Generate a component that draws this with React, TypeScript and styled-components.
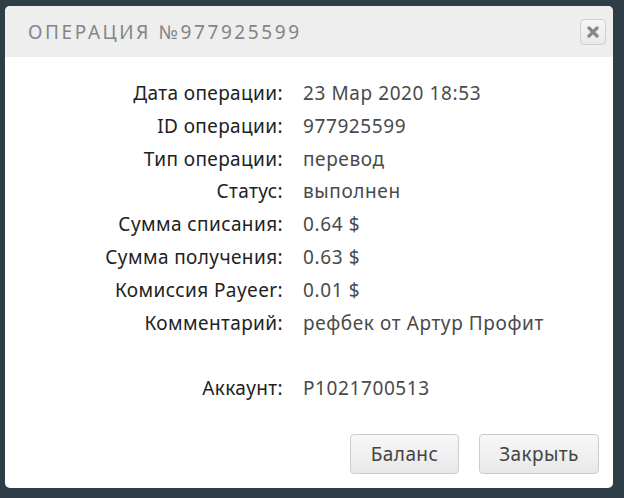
import styled, { createGlobalStyle } from "styled-components";

const GlobalStyle = createGlobalStyle`
  html, body {
    margin: 0;
    padding: 0;
    background: #2f3e46;
  }
  body {
    width: 624px;
    height: 498px;
    overflow: hidden;
  }
`;

const Page = styled.div`
  padding: 6px 11px 10px 5px;
  box-sizing: border-box;
  height: 498px;
`;

const Modal = styled.div`
  display: flex;
  flex-direction: column;
  width: 608px;
  height: 482px;
  background: #ffffff;
  border-radius: 5px;
  overflow: hidden;
`;

const Header = styled.div`
  display: flex;
  align-items: center;
  justify-content: space-between;
  height: 51px;
  padding: 0 7px 0 23px;
  background: #eeeeee;
`;

const Title = styled.h2`
  margin: 0;
  font-family: "Noto Sans", sans-serif;
  font-weight: 400;
  font-size: 19px;
  letter-spacing: 2.6px;
  color: #858585;
`;

const CloseButton = styled.button`
  display: flex;
  align-items: center;
  justify-content: center;
  width: 26px;
  height: 26px;
  padding: 0;
  border: 1px solid #cfcfcf;
  border-radius: 4px;
  background: linear-gradient(#f6f6f6, #e9e9e9);
`;

const Body = styled.div`
  flex: 1;
  display: flex;
  flex-direction: column;
  padding: 20px 14px 14px 0;
`;

const Details = styled.dl`
  display: grid;
  grid-template-columns: 278px 1fr;
  column-gap: 20px;
  margin: 0;
  font-family: "Noto Sans", sans-serif;
  font-size: 19px;
  letter-spacing: 0.4px;
  line-height: 32.8px;
`;

const Label = styled.dt`
  text-align: right;
  color: #222222;
`;

const Value = styled.dd`
  margin: 0;
  color: #4a4a4a;
  letter-spacing: 0.6px;
`;

const Spacer = styled.div`
  grid-column: 1 / -1;
  height: 32.8px;
`;

const Actions = styled.div`
  display: flex;
  justify-content: flex-end;
  gap: 20px;
  margin-top: auto;
`;

const Button = styled.button<{ $width: number }>`
  width: ${({ $width }) => $width}px;
  height: 40px;
  border: 1px solid #cccccc;
  border-radius: 4px;
  background: linear-gradient(#f8f8f8, #e8e8e8);
  font-family: "Noto Sans", sans-serif;
  font-size: 19px;
  letter-spacing: 0.4px;
  color: #444444;
`;

const rows: [string, string][] = [
  ["Дата операции:", "23 Мар 2020 18:53"],
  ["ID операции:", "977925599"],
  ["Тип операции:", "перевод"],
  ["Статус:", "выполнен"],
  ["Сумма списания:", "0.64 $"],
  ["Сумма получения:", "0.63 $"],
  ["Комиссия Payeer:", "0.01 $"],
  ["Комментарий:", "рефбек от Артур Профит"],
];

export default function App() {
  return (
    <>
      <GlobalStyle />
      <Page>
        <Modal>
          <Header>
            <Title>ОПЕРАЦИЯ №977925599</Title>
            <CloseButton>
              <svg width="12" height="12" viewBox="0 0 12 12">
                <path
                  d="M2 2 L10 10 M10 2 L2 10"
                  stroke="#888888"
                  strokeWidth="3.2"
                  strokeLinecap="round"
                />
              </svg>
            </CloseButton>
          </Header>
          <Body>
            <Details>
              {rows.map(([label, value]) => (
                <>
                  <Label key={label}>{label}</Label>
                  <Value>{value}</Value>
                </>
              ))}
              <Spacer />
              <Label>Аккаунт:</Label>
              <Value>P1021700513</Value>
            </Details>
            <Actions>
              <Button $width={109}>Баланс</Button>
              <Button $width={120}>Закрыть</Button>
            </Actions>
          </Body>
        </Modal>
      </Page>
    </>
  );
}
